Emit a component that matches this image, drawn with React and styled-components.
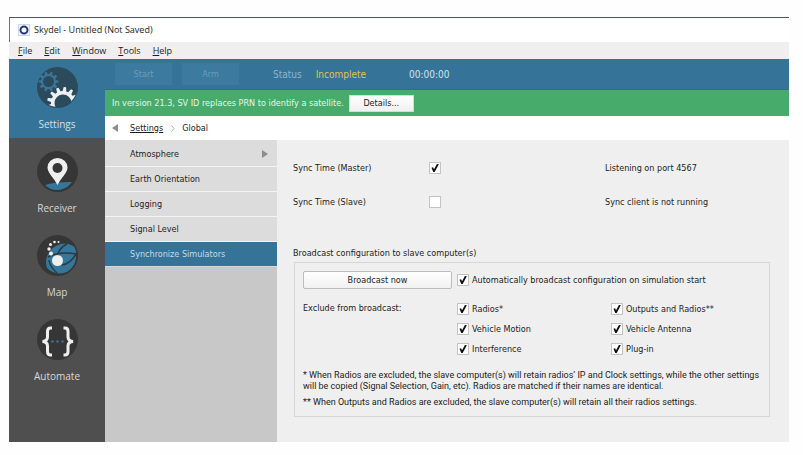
import React, { useState } from "react";
import styled, { createGlobalStyle } from "styled-components";

const uiFont = `"DejaVu Sans Condensed", "DejaVu Sans", sans-serif`;
const noteFont = `Roboto, "Liberation Sans", sans-serif`;
const systemFont = `"Open Sans", "Noto Sans", sans-serif`;

const menus = ["File", "Edit", "Window", "Tools", "Help"];

const pages = [
  { label: "Atmosphere", nested: true },
  { label: "Earth Orientation" },
  { label: "Logging" },
  { label: "Signal Level" },
  { label: "Synchronize Simulators", active: true }
];

const exclusions = [
  "Radios*",
  "Outputs and Radios**",
  "Vehicle Motion",
  "Vehicle Antenna",
  "Interference",
  "Plug-in"
];

const point = (cx, cy, r, deg) => {
  const a = (deg * Math.PI) / 180;
  return `${(cx + r * Math.cos(a)).toFixed(2)},${(cy + r * Math.sin(a)).toFixed(2)}`;
};

const gearPath = (cx, cy, inner, outer, teeth) => {
  const step = 360 / teeth;
  const points = [];
  for (let i = 0; i < teeth; i++) {
    const a = i * step;
    points.push(
      point(cx, cy, inner, a - step * 0.32),
      point(cx, cy, outer, a - step * 0.16),
      point(cx, cy, outer, a + step * 0.16),
      point(cx, cy, inner, a + step * 0.32)
    );
  }
  return `M${points.join("L")}Z`;
};

const circlePath = (cx, cy, r) =>
  `M${cx - r},${cy}a${r},${r} 0 1,0 ${2 * r},0a${r},${r} 0 1,0 ${-2 * r},0Z`;

const SettingsIcon = () => (
  <Icon viewBox="0 0 41 41">
    <clipPath id="settings-disc">
      <circle cx="20.5" cy="20.5" r="19.5" />
    </clipPath>
    <circle cx="20.5" cy="20.5" r="20.5" fill="#2b4a5c" />
    <path
      d={gearPath(11.5, 14.5, 7.5, 10, 10) + circlePath(11.5, 14.5, 5.5)}
      fill="#3b7597"
      fillRule="evenodd"
    />
    <circle cx="26" cy="36" r="14" fill="#2b4a5c" clipPath="url(#settings-disc)" />
    <path
      d={gearPath(26, 36, 12, 16, 13) + circlePath(26, 36, 8.5)}
      fill="#eef1f3"
      fillRule="evenodd"
      clipPath="url(#settings-disc)"
    />
  </Icon>
);

const ReceiverIcon = () => (
  <Icon viewBox="0 0 41 41">
    <circle cx="20.5" cy="20.5" r="20.5" fill="#363636" />
    <path d="M8 34Q16 31 35 31Q29 39 20 39Q13 39 8 34Z" fill="#34779b" />
    <path
      d="M20.5 34C17 27 10.5 22 10.5 16.5a10 9.5 0 1 1 20 0C30.5 22 24 27 20.5 34Z"
      fill="#efefef"
    />
    <circle cx="20.5" cy="17" r="5" fill="#363636" />
  </Icon>
);

const MapIcon = () => (
  <Icon viewBox="0 0 41 41">
    <clipPath id="map-disc">
      <circle cx="20.5" cy="20.5" r="19" />
    </clipPath>
    <circle cx="20.5" cy="20.5" r="20.5" fill="#363636" />
    <g clipPath="url(#map-disc)">
      <path
        d="M24 9C31 8 37 10 39 14C40 25 38 31 32 36C25 40 15 39 10 33C8 27 9 21 13 16C16 12 20 10 24 9Z"
        fill="#34779b"
      />
      <path
        d="M30 9C24 12 21 16 20 22M11 22Q22 16 40 19M25 30Q33 29 39 19M12 25Q13 32 20 38"
        fill="none"
        stroke="#2b3a43"
        strokeWidth="1.5"
      />
    </g>
    <circle cx="20.5" cy="25.5" r="5.5" fill="#eceff1" />
    <g fill="#efefef">
      <circle cx="14" cy="18.5" r="2" />
      <circle cx="12" cy="14" r="1.7" />
      <circle cx="13.5" cy="9.5" r="1.5" />
      <circle cx="17.5" cy="7" r="1.3" />
      <circle cx="21.5" cy="7" r="1" />
    </g>
  </Icon>
);

const AutomateIcon = () => (
  <Icon viewBox="0 0 41 41">
    <circle cx="20.5" cy="20.5" r="20.5" fill="#363636" />
    <g fill="none" stroke="#efefef" strokeWidth="3">
      <path d="M15 9H13.5Q10.500 9 10.500 12.5V18Q10.500 22 5.5 22.5Q10.500 23 10.500 27V32.5Q10.500 36 13.5 36H15" />
      <path d="M26.5 9H28Q31 9 31 12.5V18Q31 22 36 22.5Q31 23 31 27V32.5Q31 36 28 36H26.5" />
    </g>
    <g fill="#34779b">
      <circle cx="15.5" cy="22.5" r="1.2" />
      <circle cx="20.5" cy="22.5" r="1.2" />
      <circle cx="25.5" cy="22.5" r="1.2" />
    </g>
  </Icon>
);

const sections = [
  { label: "Settings", icon: SettingsIcon, active: true },
  { label: "Receiver", icon: ReceiverIcon },
  { label: "Map", icon: MapIcon },
  { label: "Automate", icon: AutomateIcon }
];

const Check = ({ label, initial = true, ...rest }) => {
  const [checked, setChecked] = useState(initial);
  return (
    <CheckLabel>
      <CheckBox
        type="checkbox"
        checked={checked}
        onChange={e => setChecked(e.target.checked)}
        {...rest}
      />
      {label}
    </CheckLabel>
  );
};

const App = () => (
  <Window>
    <GlobalStyle />

    <TitleBar>
      <AppIcon viewBox="0 0 12 12">
        <rect x="0.5" y="0.5" width="11" height="11" fill="#f4f8ff" stroke="#c9d8f0" />
        <circle cx="6" cy="6" r="3.5" fill="none" stroke="#2b3875" strokeWidth="2" />
      </AppIcon>
      Skydel - Untitled (Not Saved)
    </TitleBar>

    <MenuBar>
      {menus.map(menu => (
        <MenuButton key={menu}>
          <u>{menu[0]}</u>
          {menu.slice(1)}
        </MenuButton>
      ))}
    </MenuBar>

    <Body>
      <Sidebar>
        {sections.map(({ label, icon: SectionIcon, active }) => (
          <SectionButton key={label} $active={active}>
            <SectionIcon />
            {label}
          </SectionButton>
        ))}
      </Sidebar>

      <Main>
        <Toolbar>
          <ToolButton disabled>Start</ToolButton>
          <ToolButton disabled>Arm</ToolButton>
          <StatusLabel>Status</StatusLabel>
          <StatusValue>Incomplete</StatusValue>
          <Clock>00:00:00</Clock>
        </Toolbar>

        <Notice>
          In version 21.3, SV ID replaces PRN to identify a satellite.
          <DetailsButton>Details...</DetailsButton>
        </Notice>

        <Breadcrumb>
          <BackButton aria-label="Back">
            <Arrow viewBox="0 0 7 8">
              <path d="M6 0V8L0 4Z" fill="#8c8c8c" />
            </Arrow>
          </BackButton>
          <CrumbLink href="#settings">Settings</CrumbLink>
          <Chevron viewBox="0 0 4 7">
            <path d="M0.5 0.5L3 3.5L0.5 6.5" fill="none" stroke="#a8a8a8" />
          </Chevron>
          <span>Global</span>
        </Breadcrumb>

        <Columns>
          <PageList>
            {pages.map(({ label, nested, active }) => (
              <PageLink key={label} href="#page" $active={active}>
                {label}
                {nested && (
                  <Arrow viewBox="0 0 7 8">
                    <path d="M0 0V8L6 4Z" fill="#8c8c8c" />
                  </Arrow>
                )}
              </PageLink>
            ))}
          </PageList>

          <Content>
            <SyncRow>
              <label htmlFor="master">Sync Time (Master)</label>
              <Check id="master" />
              <span>Listening on port 4567</span>
            </SyncRow>
            <SyncRow>
              <label htmlFor="slave">Sync Time (Slave)</label>
              <Check id="slave" initial={false} />
              <span>Sync client is not running</span>
            </SyncRow>

            <GroupTitle>Broadcast configuration to slave computer(s)</GroupTitle>
            <Group>
              <BroadcastRow>
                <BroadcastButton>Broadcast now</BroadcastButton>
                <Check label="Automatically broadcast configuration on simulation start" />
              </BroadcastRow>
              <BroadcastRow>
                <ExcludeLabel>Exclude from broadcast:</ExcludeLabel>
                <ExcludeGrid>
                  {exclusions.map(name => (
                    <Check key={name} label={name} />
                  ))}
                </ExcludeGrid>
              </BroadcastRow>
              <Notes>
                <Note>
                  * When Radios are excluded, the slave computer(s) will retain radios’ IP and
                  Clock settings, while the other settings will be copied (Signal Selection, Gain,
                  etc). Radios are matched if their names are identical.
                </Note>
                <Note>
                  ** When Outputs and Radios are excluded, the slave computer(s) will retain all
                  their radios settings.
                </Note>
              </Notes>
            </Group>
          </Content>
        </Columns>
      </Main>
    </Body>
  </Window>
);

const GlobalStyle = createGlobalStyle`
  * {
    box-sizing: border-box;
  }

  body {
    margin: 0;
    background: #fefefe;
    color: #1c1c1c;
    font: 9px/11px ${uiFont};
  }

  button {
    padding: 0;
    border: 0;
    background: none;
    color: inherit;
    font: inherit;
  }
`;

const Window = styled.div`
  margin: 17px 14px 13px 9px;
  border-top: 1px solid #4d535f;
`;

const TitleBar = styled.header`
  display: flex;
  align-items: center;
  gap: 4px;
  height: 24px;
  padding-left: 8px;
  border-left: 1px solid #6f737c;
  background: #fff;
  font: 9px/12px ${systemFont};
`;

const AppIcon = styled.svg`
  width: 12px;
  height: 12px;
`;

const MenuBar = styled.nav`
  display: flex;
  align-items: center;
  gap: 12px;
  height: 17px;
  padding-left: 9px;
  background: #f0eeee;
  font: 9px/12px ${systemFont};
`;

const MenuButton = styled.button`
  white-space: nowrap;
`;

const Body = styled.div`
  display: flex;
`;

const Sidebar = styled.nav`
  flex: none;
  display: flex;
  flex-direction: column;
  gap: 5px;
  width: 96px;
  background: #4f4f4f;
`;

const SectionButton = styled.button`
  display: flex;
  flex-direction: column;
  align-items: center;
  gap: 9px;
  height: 79px;
  padding-top: 8px;
  background: ${p => (p.$active ? "#367398" : "none")};
  color: ${p => (p.$active ? "#cfe0ea" : "#d8d8d8")};
  font: 10px/14px ${systemFont};
`;

const Icon = styled.svg`
  flex: none;
  width: 41px;
  height: 41px;
`;

const Main = styled.main`
  flex: 1;
  min-width: 0;
`;

const Toolbar = styled.div`
  display: flex;
  align-items: center;
  height: 31px;
  padding-left: 10px;
  border-bottom: 1px solid #3f6d6b;
  background: #367398;
  font-size: 10px;
`;

const ToolButton = styled.button`
  width: 57px;
  height: 22px;
  margin-right: 10px;
  background: #3d7a9f;
  color: #6c9dba;
  font-size: 9px;
`;

const StatusLabel = styled.span`
  margin-left: 24px;
  color: #8db6cf;
`;

const StatusValue = styled.span`
  margin-left: 14px;
  color: #dcc94a;
`;

const Clock = styled.time`
  margin-left: 43px;
  color: #d3e3ee;
`;

const Notice = styled.div`
  display: flex;
  align-items: center;
  gap: 5px;
  height: 26px;
  padding-left: 7px;
  background: #47ac6b;
  color: #e6f6ea;
`;

const DetailsButton = styled.button`
  width: 65px;
  height: 17px;
  border: 1px solid #d4dcd6;
  background: linear-gradient(#fff, #f0f0f0);
  color: #1c1c1c;
`;

const Breadcrumb = styled.nav`
  display: flex;
  align-items: center;
  height: 24px;
  padding-left: 7px;
  background: #fff;
`;

const BackButton = styled.button`
  display: flex;
  margin-right: 11px;
`;

const CrumbLink = styled.a`
  color: inherit;
`;

const Arrow = styled.svg`
  width: 7px;
  height: 8px;
`;

const Chevron = styled.svg`
  width: 4px;
  height: 7px;
  margin: 0 7px 0 8px;
`;

const Columns = styled.div`
  display: flex;
`;

const PageList = styled.nav`
  flex: none;
  display: flex;
  flex-direction: column;
  width: 172px;
  border-top: 2px solid #dcdcdc;
  background: #c8c8c8;
`;

const PageLink = styled.a`
  display: flex;
  align-items: center;
  justify-content: space-between;
  height: 25px;
  padding: 0 8px 0 25px;
  border-bottom: 1px solid ${p => (p.$active ? "#d8d8d8" : "#f4f4f4")};
  background: ${p => (p.$active ? "#367398" : "#dcdcdc")};
  color: ${p => (p.$active ? "#c4dae7" : "inherit")};
  text-decoration: none;
`;

const Content = styled.section`
  flex: 1;
  min-width: 0;
  padding: 11px 19px 25px 16px;
  background: #efefef;
`;

const SyncRow = styled.div`
  display: grid;
  grid-template-columns: 136px 176px 1fr;
  align-items: center;
  height: 34px;
`;

const CheckLabel = styled.label`
  display: flex;
  align-items: center;
  gap: 3px;
  height: 12px;
`;

const CheckBox = styled.input`
  appearance: none;
  flex: none;
  display: grid;
  place-items: center;
  width: 12px;
  height: 12px;
  margin: 0;
  border: 1px solid #c3c3c3;
  background: #fff;

  &:checked::before {
    content: "";
    width: 8px;
    height: 8px;
    background: #111;
    clip-path: polygon(6% 48%, 26% 40%, 38% 66%, 74% 0, 98% 4%, 46% 100%, 28% 100%);
  }
`;

const GroupTitle = styled.h2`
  margin: 29px 0 3px;
  font: inherit;
`;

const Group = styled.div`
  display: flex;
  flex-direction: column;
  gap: 14px;
  margin-left: 1px;
  padding: 8px;
  border: 1px solid #d6d6d6;
`;

const BroadcastRow = styled.div`
  display: grid;
  grid-template-columns: 149px 1fr;
  column-gap: 5px;
  align-items: center;
`;

const BroadcastButton = styled.button`
  height: 18px;
  border: 1px solid #bcbcbc;
  border-radius: 2px;
  background: linear-gradient(#fff, #f1f1f1);
`;

const ExcludeLabel = styled.span`
  align-self: start;
`;

const ExcludeGrid = styled.div`
  display: grid;
  grid-template-columns: 154px 1fr;
  row-gap: 8px;
`;

const Notes = styled.div`
  display: flex;
  flex-direction: column;
  gap: 5px;
  padding-top: 1px;
  font-family: ${noteFont};
`;

const Note = styled.p`
  margin: 0;
`;

export default App;
